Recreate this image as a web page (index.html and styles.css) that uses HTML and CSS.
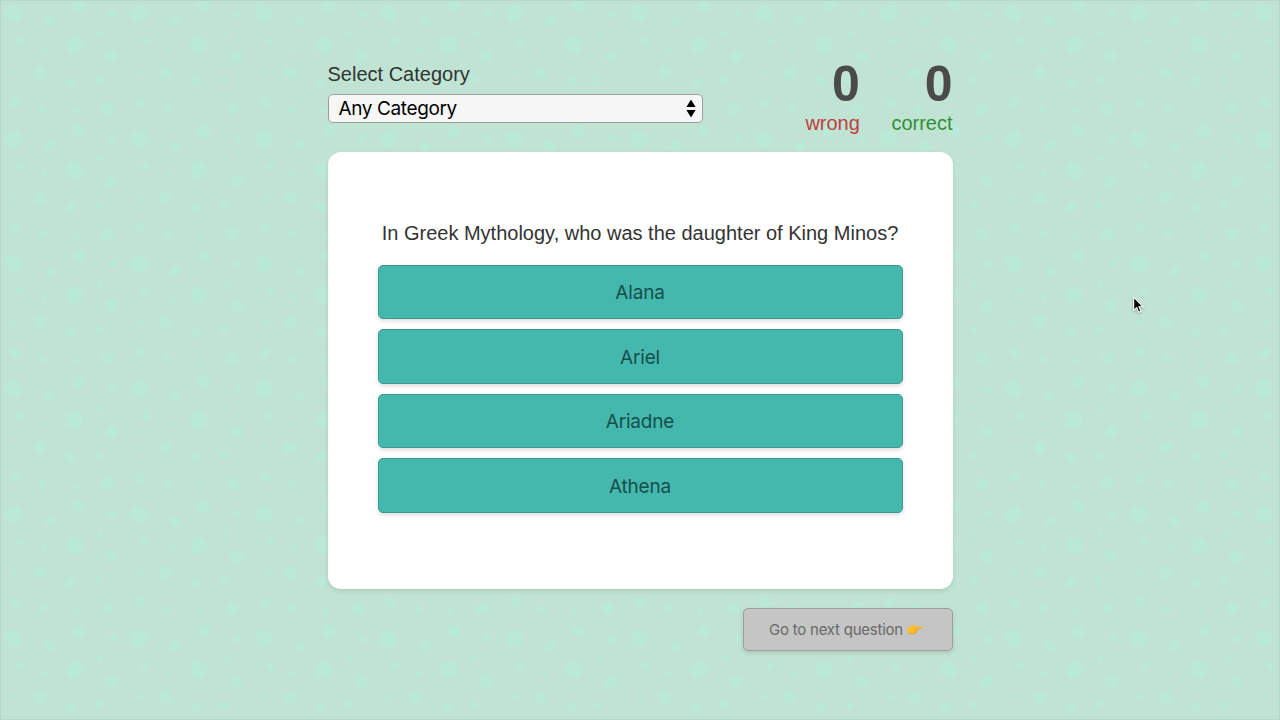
FILE: index.html
```html
<!DOCTYPE html>
<html lang="en">
<head>
<meta charset="utf-8">
<title>Trivia Quiz</title>
<link rel="stylesheet" href="styles.css">
</head>
<body>
<main class="quiz">
  <header class="quiz-header">
    <div class="category">
      <label class="category-label" for="category">Select Category</label>
      <button class="select" id="category" type="button">
        <span class="select-value">Any Category</span>
        <svg class="select-arrows" width="10" height="18" viewBox="0 0 10 18"><path d="M5 0L9.6 7.4H.4zM5 18L9.6 10.6H.4z"/></svg>
      </button>
    </div>
    <div class="scores">
      <div class="score"><strong class="score-number">0</strong><span class="score-label wrong">wrong</span></div>
      <div class="score"><strong class="score-number">0</strong><span class="score-label correct">correct</span></div>
    </div>
  </header>
  <section class="card">
    <h1 class="question">In Greek Mythology, who was the daughter of King Minos?</h1>
    <div class="answers">
      <button class="answer" type="button">Alana</button>
      <button class="answer" type="button">Ariel</button>
      <button class="answer" type="button">Ariadne</button>
      <button class="answer" type="button">Athena</button>
    </div>
  </section>
  <footer class="quiz-footer">
    <button class="next" type="button"><span class="next-text">Go to next question</span>
      <svg class="hand" width="16" height="11" viewBox="0 0 16 11"><path fill="#f9c02f" d="M.5 4.5Q2.5 2.4 5.5 1.2L8.2.4Q9.3.6 8.5 1.6L7.6 2.4H14.7Q15.9 3.3 14.7 4.5L10.4 5 10.6 6.4 9.9 8.1 9 9.4Q6 10.3 3.5 9.6L.5 9z"/><path fill="none" stroke="#df962b" stroke-width=".7" d="M7.3 3L5.8 4.4M7.6 5h2.9L14.7 4.4M7.6 6.8h2.8M7.2 8.4h2.5M.8 9l2.7.7q3 .7 5.4-.1"/></svg>
    </button>
  </footer>
</main>
<svg class="cursor" width="14" height="20" viewBox="0 0 14 20"><path d="M1.7 1.2V14.3L4.7 11.6 6.7 16.3 9 15.3 7 10.7H11z" fill="#000" stroke="#fff" stroke-width="1.1"/></svg>
</body>
</html>
```
FILE: styles.css
```css
* { box-sizing: border-box; }

body {
  margin: 0;
  height: 720px;
  overflow: hidden;
  display: flex;
  justify-content: center;
  color: #333;
  font: 20px/25px "Liberation Sans", Arial, sans-serif;
  background-color: #c0e3d3;
  background-image: url("data:image/svg+xml,%3Csvg xmlns='http://www.w3.org/2000/svg' width='125' height='125' viewBox='0 0 100 100'%3E%3Cg fill='%23bbe9d7'%3E%3Ccircle cx='11' cy='11' r='7'/%3E%3Ccircle cx='59' cy='36' r='7'/%3E%3Ccircle cx='16' cy='33' r='3'/%3E%3Ccircle cx='79' cy='64' r='3'/%3E%3Ccircle cx='34' cy='87' r='3'/%3E%3Ccircle cx='90' cy='11' r='3'/%3E%3Ccircle cx='12' cy='82' r='4'/%3E%3Ccircle cx='40' cy='17' r='4'/%3E%3Ccircle cx='63' cy='5' r='5'/%3E%3Ccircle cx='57' cy='66' r='4'/%3E%3Ccircle cx='86' cy='87' r='5'/%3E%3Ccircle cx='32' cy='58' r='5'/%3E%3Ccircle cx='89' cy='45' r='5'/%3E%3Ccircle cx='80' cy='27' r='2'/%3E%3Ccircle cx='60' cy='89' r='2'/%3E%3Ccircle cx='35' cy='39' r='2'/%3E%3Ccircle cx='12' cy='58' r='2'/%3E%3C/g%3E%3C/svg%3E");
  box-shadow: inset 0 0 0 1px #b5d8c7;
}

button { font-family: Inter, sans-serif; }

.quiz {
  width: 625px;
  margin-left: 1px;
  padding-top: 62px;
}

.quiz-header {
  display: flex;
  justify-content: space-between;
  height: 90px;
}

.category { width: 375px; }

.category-label {
  display: block;
  height: 32px;
  margin-left: -0.5px;
}

.select {
  display: flex;
  align-items: center;
  justify-content: space-between;
  width: 375px;
  height: 29px;
  padding: 0 6px 1px 9.5px;
  border: 1px solid #9b9d9c;
  border-radius: 5px;
  background: #f7f7f7;
  color: #000;
  font-size: 19px;
  letter-spacing: -0.38px;
}

.select-arrows { margin-top: 1px; transform: translateY(-0.5px); }

.scores {
  display: flex;
  gap: 31px;
}

.score {
  display: flex;
  flex-direction: column;
  align-items: flex-end;
}

.score-number {
  height: 49px;
  padding-right: 0.5px;
  font-size: 50px;
  line-height: 45px;
  color: #4a4a4a;
}

.score-label { margin-right: 0.5px; }
.wrong { color: #be4040; }
.correct { color: #319033; }

.card {
  height: 437px;
  padding: 69px 50px 0;
  border-radius: 13px;
  background: #fff;
  box-shadow: 0 2px 4px rgba(0, 0, 0, .1);
  text-align: center;
}

.question {
  margin: 0 1px 18.8px 0;
  font-size: 20px;
  font-weight: 400;
  line-height: 25px;
}

.answers {
  display: grid;
  grid-template-rows: repeat(4, 54.5px);
  gap: 10px;
}

.answer {
  padding: 0 1px 0 0;
  border: 1px solid #399b93;
  border-radius: 5px;
  background: #45b8ae;
  color: #154f4b;
  font-size: 19px;
  letter-spacing: -0.2px;
  box-shadow: 0 2px 4px rgba(0, 0, 0, .14);
}

.answer:nth-child(even) { padding-top: 1px; }

.quiz-footer {
  display: flex;
  justify-content: flex-end;
  padding-top: 19px;
}

.next {
  display: flex;
  align-items: center;
  gap: 4px;
  width: 210px;
  height: 43px;
  padding: 0 0 0 25px;
  border: 1px solid #9e9e9e;
  border-radius: 5px;
  background: #c5c5c5;
  color: #696969;
  font-size: 15px;
  letter-spacing: -0.23px;
  box-shadow: 0 2px 4px rgba(0, 0, 0, .12);
}

.cursor {
  position: absolute;
  left: 1132px;
  top: 296px;
  filter: drop-shadow(0 1px 1px rgba(0, 0, 0, .3));
}
```
